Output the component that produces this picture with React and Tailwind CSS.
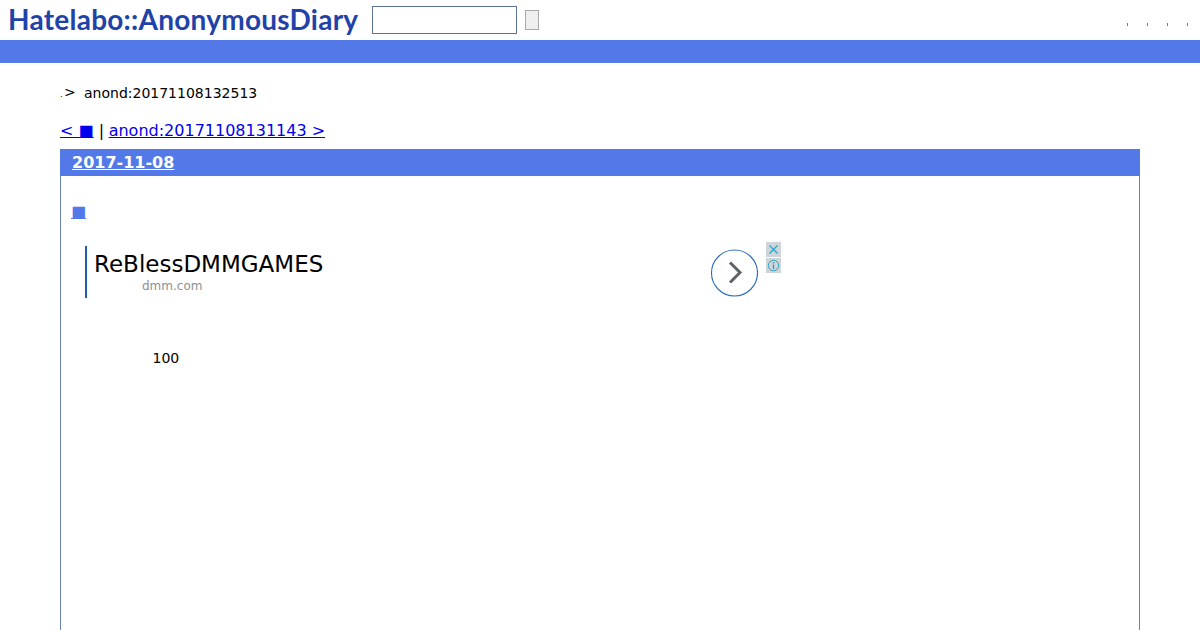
import { useState } from 'react'

function NextArrow() {
  return (
    <svg width="48" height="48" viewBox="0 0 48 48" className="block">
      <circle cx="24.5" cy="24" r="23" fill="white" stroke="#2a6db5" strokeWidth="1.1" />
      <path d="M20 13.5 L30 23.5 L20 33.5" fill="none" stroke="#5f6368" strokeWidth="3" />
    </svg>
  )
}

function AdBadges() {
  return (
    <div className="absolute left-[681px] top-0 flex flex-col gap-[1px]">
      <div className="w-[15px] h-[15px] bg-[#cdd5d9] flex items-center justify-center">
        <svg width="11" height="11" viewBox="0 0 11 11">
          <path d="M1.5 1.5 L9.5 9.5 M9.5 1.5 L1.5 9.5" stroke="#2f9fc4" strokeWidth="1.1" />
        </svg>
      </div>
      <div className="w-[15px] h-[15px] bg-[#cdd5d9] flex items-center justify-center">
        <svg width="13" height="13" viewBox="0 0 13 13">
          <circle cx="6.5" cy="6.5" r="5.2" fill="none" stroke="#2f9fc4" strokeWidth="1" />
          <path d="M6.5 3 V4.4 M6.5 5.6 V10" stroke="#2f9fc4" strokeWidth="1.3" />
        </svg>
      </div>
    </div>
  )
}

export default function App() {
  const [query, setQuery] = useState('')

  return (
    <div className="h-[630px] overflow-hidden bg-white text-black font-['DejaVu_Sans',sans-serif]">
      {/* Header */}
      <div className="h-10 flex items-center">
        <a
          href="#"
          className="ml-[8px] w-[350px] -mt-[2px] whitespace-nowrap text-[28px] leading-10 font-bold tracking-[0.25px] text-[#1f43a8] font-['Lato',sans-serif]"
        >
          Hatelabo::AnonymousDiary
        </a>
        <input
          value={query}
          onChange={(e) => setQuery(e.target.value)}
          className="ml-[14px] w-[145px] h-7 border border-[#5a7199] bg-white box-border"
        />
        <button className="ml-2 w-[14px] h-5 border border-[#a9a9a9] bg-[#efefef] box-border" />
        <div className="ml-auto mr-[12px] mt-[8px] flex gap-[19px]">
          <span className="w-[1px] h-[3px] bg-[#777]" />
          <span className="w-[1px] h-[3px] bg-[#777]" />
          <span className="w-[1px] h-[3px] bg-[#777]" />
          <span className="w-[1px] h-[3px] bg-[#777]" />
        </div>
      </div>
      <div className="h-[23px] bg-[#5279e7]" />

      {/* Breadcrumb */}
      <div className="mx-[60px] mt-[21px] h-[18px] flex items-center text-sm leading-[18px] whitespace-nowrap">
        <span className="text-[8px] mt-[4px] w-[4px]">.</span>
        <span className="w-[20px] -mt-[2px]">&gt;</span>
        <span>anond:20171108132513</span>
      </div>

      {/* Pager */}
      <div className="mx-[60px] mt-[19px] h-[19px] text-base leading-5 whitespace-nowrap">
        <a href="#" className="text-[#0000ee] underline">&lt; ■</a>
        <span> | </span>
        <a href="#" className="-ml-[0.5px] text-[#0000ee] underline">anond:20171108131143 &gt;</a>
      </div>

      {/* Day section */}
      <div className="mx-[60px] mt-[9px] h-[600px] border border-[#6b7fb8] border-t-0">
        <div className="h-[27px] -mx-[1px] bg-[#5279e7] pl-3 text-base font-bold leading-[28px] text-white">
          <a href="#" className="underline">2017-11-08</a>
        </div>
        <div className="pl-[10px] pt-[26px] h-[22px] box-content text-base leading-[20px]">
          <a href="#" className="text-[#5279e7] underline">■</a>
        </div>

        {/* Ad */}
        <div className="relative ml-[24px] mt-[18px] h-[56px]">
          <div className="flex h-[52px] mt-[4px] absolute left-0 top-0 border-l-2 border-[#1f5fa8] pl-[7px]">
            <div>
              <div className="text-[23px] leading-[28px] mt-[4px] whitespace-nowrap">ReBlessDMMGAMES</div>
              <div className="ml-[48px] text-xs leading-[16px] text-[#8f8f8f]">dmm.com</div>
            </div>
          </div>
          <div className="absolute left-[625px] top-[7px]">
            <NextArrow />
          </div>
          <AdBadges />
        </div>

        <div className="ml-[91.5px] mt-[51px] text-sm leading-[18px]">100</div>
      </div>
    </div>
  )
}
